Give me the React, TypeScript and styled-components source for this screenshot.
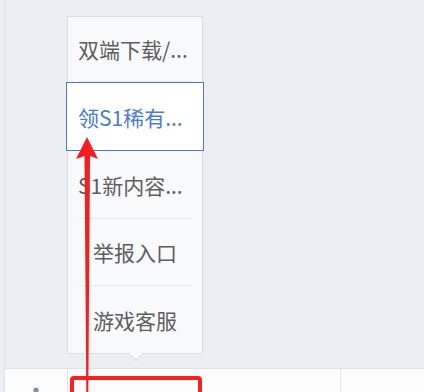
import styled, { createGlobalStyle } from "styled-components";

const Global = createGlobalStyle`
    html, body {
        margin: 0;
        padding: 0;
        background: #ebeff3;
    }
    body {
        font-family: "Microsoft YaHei", "Noto Sans CJK SC", sans-serif;
    }
`;

const Page = styled.div`
    width: 424px;
    height: 392px;
    padding-left: 4px;
    box-sizing: border-box;
    overflow: hidden;
    position: relative;
`;

const Frame = styled.div`
    height: 100%;
    border-left: 1px solid #dde2e7;
    display: flex;
    flex-direction: column;
`;

const Stage = styled.div`
    flex: 1;
    padding: 16px 0 0 62px;
`;

const Menu = styled.div`
    position: relative;
    width: 136px;
    box-sizing: border-box;
    background: #f8f9fa;
    border: 1px solid #d9dde2;
    display: flex;
    flex-direction: column;

    &::after {
        content: "";
        position: absolute;
        left: 63px;
        bottom: -6px;
        width: 9px;
        height: 9px;
        background: #f8f9fa;
        border-right: 1px solid #d9dde2;
        border-bottom: 1px solid #d9dde2;
        transform: rotate(45deg);
    }
`;

const Item = styled.div<{ $h: number; $last?: boolean; $start?: boolean }>`
    height: ${(p) => p.$h}px;
    box-sizing: border-box;
    margin: 0 10px;
    border-bottom: ${(p) => (p.$last ? "none" : "1px solid #e6e8eb")};
    display: flex;
    align-items: center;
    justify-content: ${(p) => (p.$start ? "flex-start" : "center")};
    font-size: 21px;
    color: #5e5e5e;
    white-space: nowrap;
`;

const ActiveItem = styled.div<{ $h: number }>`
    height: ${(p) => p.$h}px;
    box-sizing: border-box;
    margin: 0 -2px;
    padding-left: 11px;
    border: 1px solid #4c79c6;
    background: #ffffff;
    display: flex;
    align-items: center;
    font-size: 21px;
    color: #4a7bd0;
    white-space: nowrap;
`;

const TabBar = styled.div`
    height: 23px;
    flex-shrink: 0;
    display: flex;
    background: #fcfcfc;
    border-top: 1px solid #dfe3e8;
`;

const Tab = styled.div<{ $w?: number }>`
    ${(p) => (p.$w ? `width: ${p.$w}px;` : "flex: 1;")}
    flex-shrink: 0;
    box-sizing: border-box;
    border-right: 1px solid #e2e4e7;
    display: flex;
    justify-content: center;
    padding-top: 18px;
    &:last-child {
        border-right: none;
    }
`;

const Marker = styled.div`
    position: absolute;
    left: 70px;
    top: 376px;
    width: 132px;
    height: 30px;
    box-sizing: border-box;
    border: 4px solid #fb1f1f;
    border-radius: 4px;
`;

const Arrow = styled.svg`
    position: absolute;
    left: 0;
    top: 0;
    pointer-events: none;
`;

const App = () => {
    return (
        <>
            <Global />
            <Page>
                <Frame>
                    <Stage>
                        <Menu>
                            <Item $h={65} $start>双端下载/...</Item>
                            <ActiveItem $h={69}>领S1稀有...</ActiveItem>
                            <Item $h={68} $start>S1新内容...</Item>
                            <Item $h={67}>举报入口</Item>
                            <Item $h={67} $last>游戏客服</Item>
                        </Menu>
                    </Stage>
                    <TabBar>
                        <Tab $w={63}>
                            <svg width="6" height="6" viewBox="0 0 6 6">
                                <circle cx="3" cy="3" r="2.6" fill="#8a8f96" />
                            </svg>
                        </Tab>
                        <Tab $w={273} />
                        <Tab />
                    </TabBar>
                </Frame>
                <Marker />
                <Arrow width="424" height="392" viewBox="0 0 424 392">
                    <polygon
                        points="87,137 98,159 90,156 88.3,392 86.3,392 84.5,156 76,159"
                        fill="#f51d1d"
                    />
                </Arrow>
            </Page>
        </>
    );
};

export default App;
